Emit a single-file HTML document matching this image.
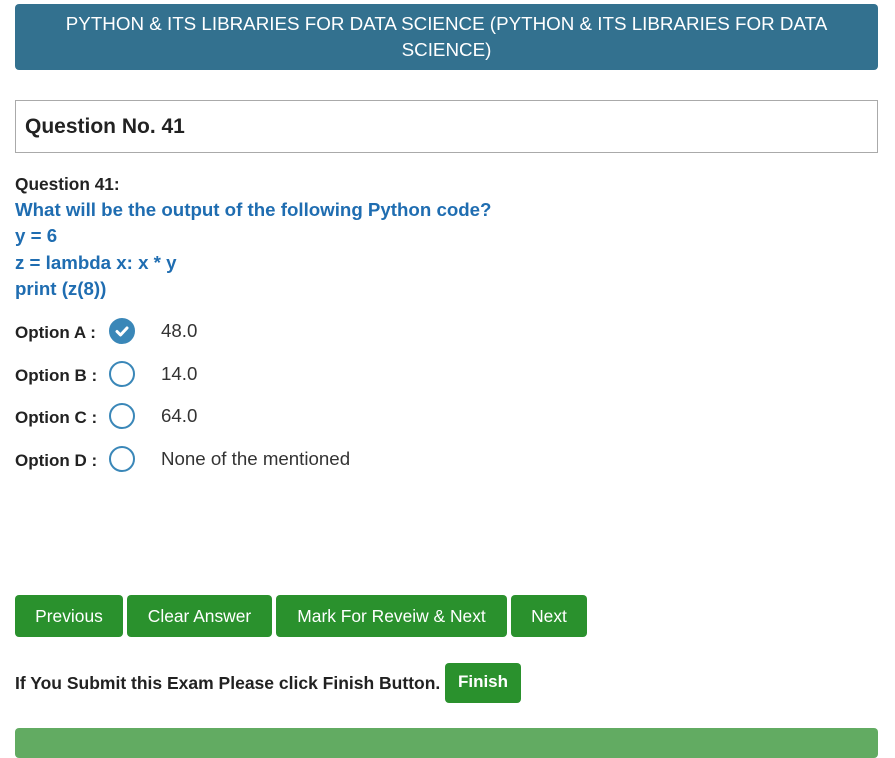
<!DOCTYPE html>
<html><head><style>
body{margin:0;background:#fff;font-family:"Liberation Sans",Arial,sans-serif;color:#333;width:895px;height:747px;overflow:hidden;position:relative}
.hd{position:absolute;left:15px;top:4px;width:863px;height:66px;background:#33718f;border-radius:4px;color:#fff;text-align:center;font-size:18.8px;line-height:26px;padding-top:7px;box-sizing:border-box}
.qb{position:absolute;left:15px;top:100px;width:863px;height:53px;border:1px solid #aaa;box-sizing:border-box;font-weight:bold;font-size:21px;padding-left:9px;line-height:51px;color:#222}
.ql{position:absolute;left:15px;top:174px;font-weight:bold;font-size:17.3px;color:#222}
.qt{position:absolute;left:15px;top:197px;font-weight:bold;font-size:18.7px;line-height:26.3px;color:#1f6db1}
.op{position:absolute;left:15px;font-size:17px;height:30px;line-height:30px}
.op b{color:#222;position:relative;top:2px}
.c{position:absolute;left:94px;top:2px;width:22px;height:22px;border:2px solid #3a87b8;border-radius:50%}
.v{position:absolute;left:146px;top:0;font-size:18.7px;white-space:nowrap;color:#333}
.btn{position:absolute;top:595px;height:42px;background:#2a912d;color:#fff;border-radius:4px;font-size:17.4px;line-height:42px;text-align:center}
</style></head><body>
<div class="hd">PYTHON &amp; ITS LIBRARIES FOR DATA SCIENCE (PYTHON &amp; ITS LIBRARIES FOR DATA<br>SCIENCE)</div>
<div class="qb">Question No. 41</div>
<div class="ql">Question 41:</div>
<div class="qt">What will be the output of the following Python code?<br>y = 6<br>z = lambda x: x * y<br>print (z(8))</div>
<div class="op" style="top:316px"><b>Option A :</b><div class="c" style="background:#3a87b8"><svg width="22" height="22" viewBox="0 0 22 22"><path d="M6 11.5l3.5 3.5 6.5-7" stroke="#fff" stroke-width="3" fill="none" stroke-linecap="round" stroke-linejoin="round"/></svg></div><span class="v">48.0</span></div>
<div class="op" style="top:359px"><b>Option B :</b><div class="c"></div><span class="v">14.0</span></div>
<div class="op" style="top:401px"><b>Option C :</b><div class="c"></div><span class="v">64.0</span></div>
<div class="op" style="top:444px"><b>Option D :</b><div class="c"></div><span class="v">None of the mentioned</span></div>
<div class="btn" style="left:15px;width:108px">Previous</div>
<div class="btn" style="left:127px;width:145px">Clear Answer</div>
<div class="btn" style="left:276px;width:231px">Mark For Reveiw &amp; Next</div>
<div class="btn" style="left:511px;width:76px">Next</div>
<div style="position:absolute;left:15px;top:673px;font-weight:bold;font-size:17.5px;color:#222">If You Submit this Exam Please click Finish Button.</div>
<div class="btn" style="left:445px;top:663px;width:76px;height:40px;line-height:38px;font-weight:bold;font-size:17px">Finish</div>
<div style="position:absolute;left:15px;top:728px;width:863px;height:30px;background:#62ab62;border-radius:4px"></div>
</body></html>
